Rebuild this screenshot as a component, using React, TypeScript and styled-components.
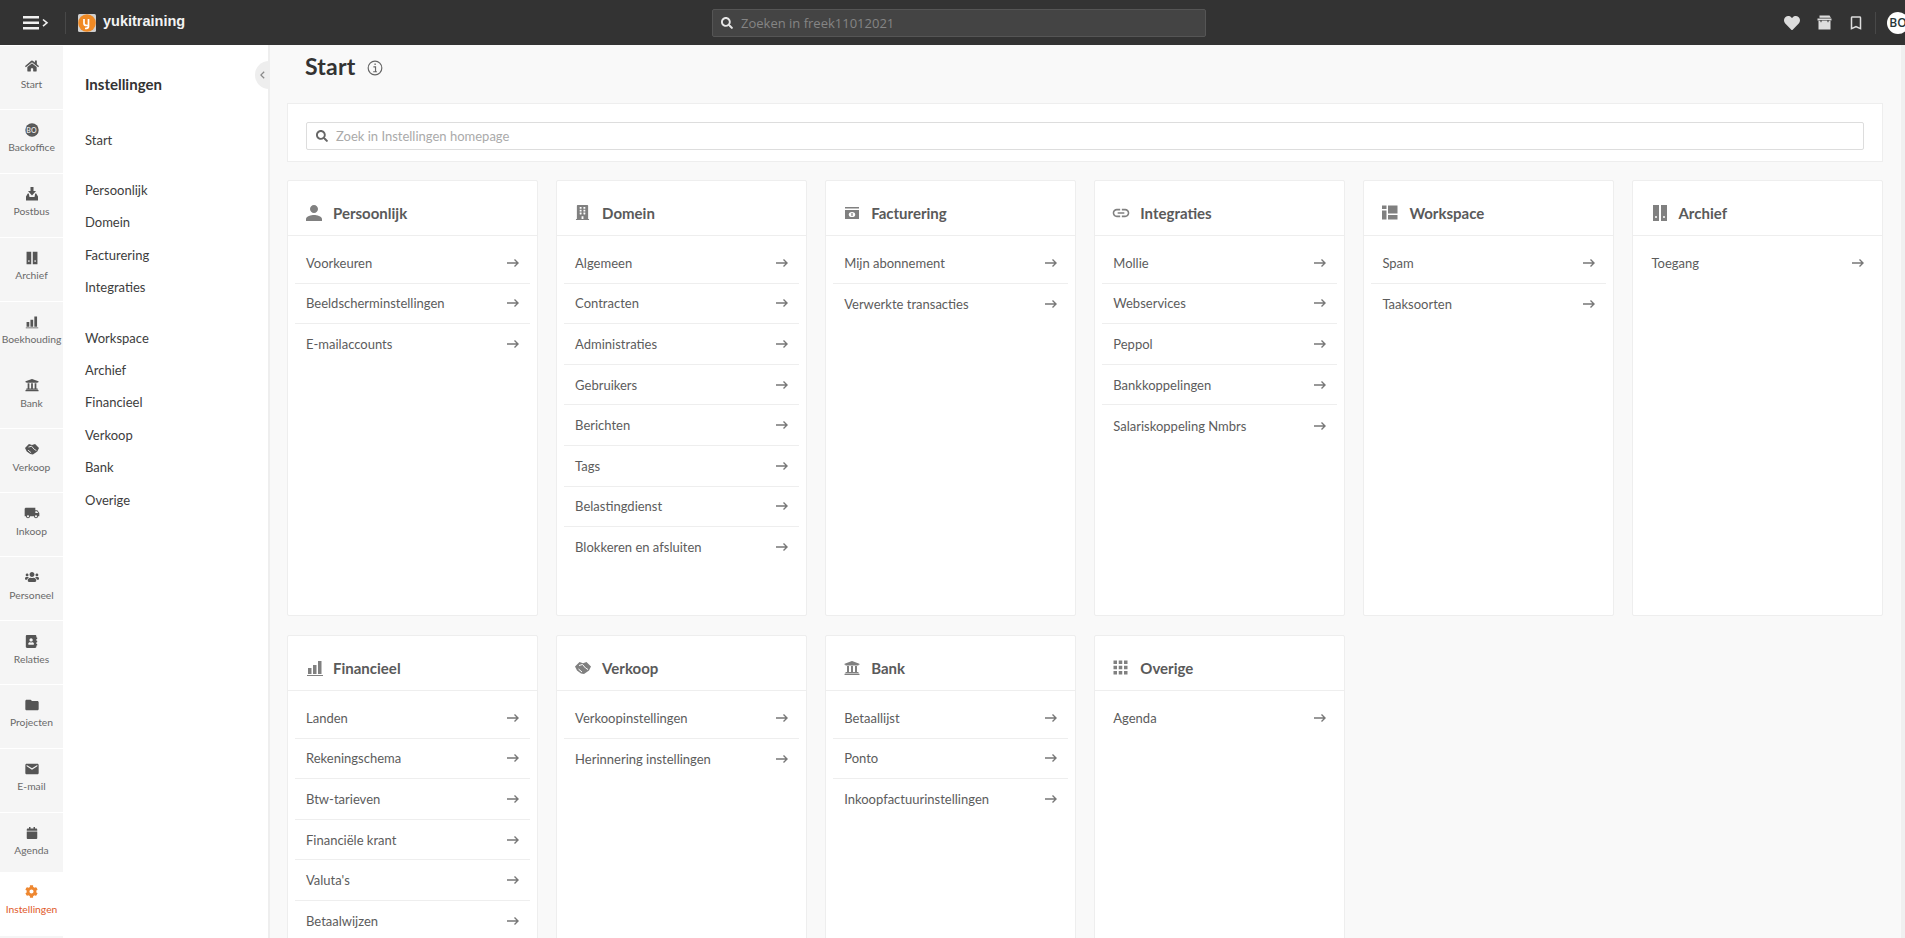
import React from "react";
import styled, { createGlobalStyle } from "styled-components";
import {
  MdPerson, MdLink, MdApps, MdEmail, MdLocalShipping, MdFolder, MdChevronLeft, MdBookmarkBorder,
} from "react-icons/md";
import { FaUsers, FaAddressBook, FaSearch, FaHeart, FaCog, FaCalendar, FaHome, FaBuilding, FaUniversity } from "react-icons/fa";

const FONT = `"Lato", "Noto Sans", sans-serif`;

const Global = createGlobalStyle`
  html, body { margin: 0; padding: 0; height: 100%; overflow: hidden; background: #f9f9f9; }
  body { font-family: ${FONT}; }
  * { box-sizing: border-box; }
`;

const Page = styled.div`
  width: 1905px;
  height: 938px;
  display: flex;
  flex-direction: column;
  overflow: hidden;
`;

const Header = styled.header`
  flex: 0 0 45px;
  height: 45px;
  background: #333333;
  display: grid;
  grid-template-columns: 712px 494px minmax(0, 1fr);
  align-items: center;
`;

const Brand = styled.div`
  display: flex;
  align-items: center;
  padding-left: 23px;
`;

const Burger = styled.div`
  width: 42px;
  display: flex;
  align-items: center;
`;

const VDivider = styled.div`
  flex: none;
  width: 1px;
  height: 22px;
  background: #484848;
`;

const LogoWrap = styled.div`
  width: 18px;
  height: 18px;
  margin-left: 12px;
  display: flex;
`;

const BrandName = styled.span`
  margin-left: 7px;
  margin-top: -3px;
  font: bold 14.5px "Liberation Sans", sans-serif;
  color: #f2f2f2;
`;

const TopSearch = styled.div`
  height: 28px;
  background: #444444;
  border: 1px solid #555555;
  border-radius: 2px;
  display: flex;
  align-items: center;
  gap: 8px;
  padding-left: 8px;
  color: #e6e6e6;
  font-size: 12px;
`;

const TopPlaceholder = styled.span`
  font: 13px "Open Sans", sans-serif;
  color: #858585;
`;

const TopRight = styled.div`
  display: flex;
  align-items: center;
  padding-left: 578px;
  color: #dddddd;
`;

const TopIcon = styled.div<{ $w: number }>`
  flex: none;
  width: ${(p) => p.$w}px;
  display: flex;
`;

const Avatar = styled.div`
  width: 22px;
  height: 22px;
  flex: 0 0 22px;
  margin-left: 11px;
  border-radius: 50%;
  background: #fff;
  color: #26363a;
  font: 600 12px "Open Sans", sans-serif;
  display: flex;
  align-items: center;
  justify-content: center;
`;

const Body = styled.div`
  flex: 1;
  display: flex;
  min-height: 0;
`;

const Rail = styled.nav`
  flex: 0 0 63px;
  background: #fff;
  overflow: hidden;
  padding-top: 1px;
`;

const RailItem = styled.div<{ $active?: boolean; $h?: number }>`
  height: ${(p) => p.$h ?? 63}px;
  margin-bottom: ${(p) => (p.$h ? 0 : 0.9)}px;
  background: ${(p) => (p.$active ? "#fff" : "#f5f5f5")};
  color: ${(p) => (p.$active ? "#ee8730" : "#555")};
  display: flex;
  flex-direction: column;
  align-items: center;
  padding-top: 11px;
`;

const RailIconBox = styled.div`
  height: 18px;
  display: flex;
  align-items: center;
  justify-content: center;
`;

const RailLabel = styled.span<{ $active?: boolean }>`
  margin-top: ${(p) => (p.$active ? 0 : 0.5)}px;
  font-size: 10.3px;
  line-height: 17px;
  white-space: nowrap;
  color: ${(p) => (p.$active ? "#e0592a" : "#6a6a6a")};
`;

const SubNav = styled.aside`
  position: relative;
  flex: 0 0 207px;
  background: #fff;
  border-right: 2px solid #eeeeee;
  padding: 29px 0 0 22px;
`;

const SubTitle = styled.div`
  font-size: 15px;
  font-weight: 700;
  line-height: 20px;
  color: #333;
  margin-bottom: 29.5px;
`;

const SubGroup = styled.div`
  margin-bottom: 18px;
`;

const SubLink = styled.div`
  font-size: 13px;
  line-height: 32.4px;
  color: #3d3d3d;
`;

const Collapse = styled.div`
  position: absolute;
  top: 16px;
  right: -2px;
  width: 15px;
  height: 28px;
  border-radius: 14px 0 0 14px;
  background: #eeeeee;
  color: #8a8a8a;
  display: flex;
  align-items: center;
  justify-content: center;
`;

const Main = styled.main`
  flex: 1;
  min-width: 0;
  overflow: hidden;
  padding: 0 18px 0 17px;
  border-right: 4px solid #f0f0f0;
`;

const TitleBar = styled.div`
  height: 58px;
  display: flex;
  align-items: flex-start;
  gap: 12px;
  padding: 6px 0 0 18px;
  color: #666;
`;

const Title = styled.h1`
  margin: 0;
  font-size: 23px;
  line-height: 30px;
  font-weight: 700;
  color: #333;
  letter-spacing: 0.2px;
`;

const InfoWrap = styled.div`
  margin-top: 9px;
  display: flex;
`;

const SearchPanel = styled.div`
  height: 59px;
  background: #fff;
  border: 1px solid #eeeeee;
  padding: 18px 18px 0;
  margin-bottom: 18px;
`;

const SearchField = styled.div`
  height: 28px;
  border: 1px solid #dddddd;
  border-radius: 2px;
  display: flex;
  align-items: center;
  gap: 8px;
  padding-left: 9px;
  color: #666;
`;

const SearchText = styled.span`
  font-size: 13px;
  color: #aaaaaa;
`;

const CardGrid = styled.div`
  display: grid;
  grid-template-columns: repeat(6, 250.8px);
  grid-auto-rows: 436px;
  gap: 19px 18.3px;
`;

const Card = styled.section`
  background: #fff;
  border: 1px solid #eeeeee;
  border-radius: 2px;
  padding: 0 7px;
`;

const CardHead = styled.div`
  height: 55px;
  margin: 0 -7px;
  padding: 9px 0 0 18px;
  display: flex;
  align-items: center;
  border-bottom: 1px solid #eeeeee;
`;

const CardIcon = styled.div`
  width: 27px;
  height: 20px;
  display: flex;
  align-items: center;
  color: #808080;
`;

const Nudge = styled.span<{ $x: number }>`
  display: flex;
  margin-left: ${(p) => p.$x}px;
`;

const CardTitle = styled.h2`
  margin: 0;
  font-size: 15px;
  font-weight: 700;
  color: #5a5a5a;
`;

const List = styled.ul`
  list-style: none;
  margin: 0;
  padding: 7px 0 0;
`;

const Item = styled.li`
  height: 40.6px;
  padding: 0 11px;
  display: flex;
  align-items: center;
  justify-content: space-between;
  font-size: 13px;
  color: #5c5c5c;
  border-bottom: 1px solid #eeeeee;
  &:last-child { border-bottom: 0; }
`;

const Arrow = () => (
  <svg width="12" height="10" viewBox="0 0 12 10" fill="none" stroke="#777" strokeWidth="1.4">
    <path d="M0 5h11M7.500 1.500 11 5 7.500 8.500" />
  </svg>
);

const ArchiveIcon = ({ s = 18 }: { s?: number }) => (
  <svg width={s} height={s} viewBox="0 0 18 18" fill="currentColor">
    <path d="M2 1h6v16H2zM10 1h6v16h-6z" />
    <circle cx="5" cy="13" r="1" fill="#fff" />
    <circle cx="13" cy="13" r="1" fill="#fff" />
  </svg>
);

const BarsIcon = ({ s = 18 }: { s?: number }) => (
  <svg width={s} height={s} viewBox="0 0 18 18" fill="currentColor">
    <path d="M2 9h3.500v6H2zM7 6h3.500v9H7zM12 2h3.500v13H12zM1 16h16v1H1z" />
  </svg>
);

const BillIcon = ({ s = 16 }: { s?: number }) => (
  <svg width={s} height={s} viewBox="0 0 16 16" fill="currentColor">
    <path d="M1 2h14v1.500H1zM1 5h14v9H1z" />
    <ellipse cx="8" cy="9.500" rx="3.200" ry="2.600" fill="#fff" />
    <rect x="7.400" y="8" width="1.200" height="3" />
  </svg>
);

const WorkspaceIcon = () => (
  <svg width="16" height="15" viewBox="0 0 16 15" fill="currentColor">
    <path d="M0 .500h4.500v3.500H0zM0 5.500h4.500v9H0zM6 .500h9.500v8H6zM6 10h9.500v4.500H6z" />
  </svg>
);

const BoxIcon = () => (
  <svg width="15" height="15" viewBox="0 0 15 15" fill="currentColor">
    <path d="M2.500 0.500h10l1.500 2.300h-11.500zM.5 3.500h14v2H.5zM1.500 6h12v8.500h-12z" />
    <rect x="3.500" y="5" width="1" height="2.200" fill="#333" />
    <rect x="10.500" y="5" width="1" height="2.200" fill="#333" />
  </svg>
);

const InboxIcon = () => (
  <svg width="14" height="14" viewBox="0 0 14 14" fill="currentColor">
    <path d="M5.500 0h3v4H11L7 8.500 3 4h2.500z" />
    <path d="M2.800 6.500 1 9.500V13.500h12V9.500l-1.800-3h-1L9.500 10h-5L3.800 6.500z" />
  </svg>
);

const ShakeIcon = ({ w = 16, bg = "#fff" }: { w?: number; bg?: string }) => (
  <svg width={w} height={(w * 12) / 16} viewBox="0 0 16 12" fill="currentColor">
    <path d="M4.500 0 8 1.200 11.500 0 16 4.500 14 8.500 9 12 6 11.500 2 8.500 0 4.500z" />
    <path d="M4 3.500 7.500 2.500 10.500 6 13 7.500M3.500 7 7 10" fill="none" stroke={bg} strokeWidth="1" />
  </svg>
);

const InfoIcon = () => (
  <svg width="16" height="16" viewBox="0 0 15 15" fill="none" stroke="#666" strokeWidth="1.1">
    <circle cx="7.500" cy="7.500" r="6.400" />
    <path d="M6 6.500h2v4.300M5.800 11h3.500" />
    <path d="M7 4h1.200" strokeWidth="1.500" />
  </svg>
);

const Logo = () => (
  <svg width="18" height="18" viewBox="0 0 18 18">
    <rect width="18" height="18" rx="1.500" fill="#cfcfcf" />
    <circle cx="9" cy="9" r="8.800" fill="#f08a24" />
    <path d="M6 5v4.500c0 1.500 1 2 2.800 2h1.700V5M10.500 9v3.500c0 1.500-1 2-3.500 2" fill="none" stroke="#fff" strokeWidth="1.700" />
  </svg>
);

const BurgerIcon = () => (
  <svg width="26" height="14" viewBox="0 0 26 14" fill="#f0f0f0">
    <path d="M0 0h16v2.400H0zM0 5.500h16v2.400H0zM0 11h16v2.400H0z" />
    <path d="M20 3.500l4 3.300-4 3.300" fill="none" stroke="#f0f0f0" strokeWidth="1.600" />
  </svg>
);

const BoSmall = () => (
  <svg width="14" height="14" viewBox="0 0 14 14">
    <circle cx="7" cy="7" r="6.700" fill="#555" />
    <circle cx="7" cy="7" r="5" fill="none" stroke="#777" strokeWidth=".4" />
  </svg>
);

const BoIconBox = styled.div`
  position: relative;
  display: flex;
  width: 14px;
  height: 14px;
`;

const BoText = styled.span`
  position: absolute;
  inset: 0;
  display: flex;
  align-items: center;
  justify-content: center;
  font-size: 7px;
  color: #ddd;
  font-weight: 700;
`;

type RailDef = { label: string; icon: React.ReactNode; active?: boolean; h?: number };

const rail: RailDef[] = [
  { label: "Start", icon: <FaHome size={14} /> },
  { label: "Backoffice", icon: <BoIconBox><BoSmall /><BoText>BO</BoText></BoIconBox> },
  { label: "Postbus", icon: <InboxIcon /> },
  { label: "Archief", icon: <ArchiveIcon s={14} /> },
  { label: "Boekhouding", icon: <BarsIcon s={14} /> },
  { label: "Bank", icon: <FaUniversity size={14} /> },
  { label: "Verkoop", icon: <ShakeIcon w={14} bg="#f5f5f5" /> },
  { label: "Inkoop", icon: <MdLocalShipping size={16} /> },
  { label: "Personeel", icon: <FaUsers size={14} /> },
  { label: "Relaties", icon: <FaAddressBook size={13} /> },
  { label: "Projecten", icon: <MdFolder size={16} /> },
  { label: "E-mail", icon: <MdEmail size={16} /> },
  { label: "Agenda", icon: <FaCalendar size={12} />, h: 59 },
  { label: "Instellingen", icon: <FaCog size={13} />, active: true },
  { label: "", icon: null },
];

const subA = ["Persoonlijk", "Domein", "Facturering", "Integraties"];
const subB = ["Workspace", "Archief", "Financieel", "Verkoop", "Bank", "Overige"];

type CardDef = { title: string; icon: React.ReactNode; items: string[] };

const cards: CardDef[] = [
  { title: "Persoonlijk", icon: <Nudge $x={-4}><MdPerson size={24} /></Nudge>, items: ["Voorkeuren", "Beeldscherminstellingen", "E-mailaccounts"] },
  { title: "Domein", icon: <FaBuilding size={15} />, items: ["Algemeen", "Contracten", "Administraties", "Gebruikers", "Berichten", "Tags", "Belastingdienst", "Blokkeren en afsluiten"] },
  { title: "Facturering", icon: <BillIcon />, items: ["Mijn abonnement", "Verwerkte transacties"] },
  { title: "Integraties", icon: <Nudge $x={-2}><MdLink size={20} /></Nudge>, items: ["Mollie", "Webservices", "Peppol", "Bankkoppelingen", "Salariskoppeling Nmbrs"] },
  { title: "Workspace", icon: <WorkspaceIcon />, items: ["Spam", "Taaksoorten"] },
  { title: "Archief", icon: <ArchiveIcon />, items: ["Toegang"] },
  { title: "Financieel", icon: <BarsIcon />, items: ["Landen", "Rekeningschema", "Btw-tarieven", "Financiële krant", "Valuta's", "Betaalwijzen"] },
  { title: "Verkoop", icon: <ShakeIcon />, items: ["Verkoopinstellingen", "Herinnering instellingen"] },
  { title: "Bank", icon: <FaUniversity size={16} />, items: ["Betaallijst", "Ponto", "Inkoopfactuurinstellingen"] },
  { title: "Overige", icon: <Nudge $x={-3}><MdApps size={21} /></Nudge>, items: ["Agenda"] },
];

export default function App() {
  return (
    <Page>
      <Global />
      <Header>
        <Brand>
          <Burger><BurgerIcon /></Burger>
          <VDivider />
          <LogoWrap><Logo /></LogoWrap>
          <BrandName>yukitraining</BrandName>
        </Brand>
        <TopSearch>
          <FaSearch />
          <TopPlaceholder>Zoeken in freek11012021</TopPlaceholder>
        </TopSearch>
        <TopRight>
          <TopIcon $w={33}><FaHeart size={16} /></TopIcon>
          <TopIcon $w={30}><BoxIcon /></TopIcon>
          <TopIcon $w={28}><MdBookmarkBorder size={18} /></TopIcon>
          <VDivider />
          <Avatar>BO</Avatar>
        </TopRight>
      </Header>
      <Body>
        <Rail>
          {rail.map((r, i) => (
            <RailItem key={i} $active={r.active} $h={r.h}>
              <RailIconBox>{r.icon}</RailIconBox>
              <RailLabel $active={r.active}>{r.label}</RailLabel>
            </RailItem>
          ))}
        </Rail>
        <SubNav>
          <SubTitle>Instellingen</SubTitle>
          <SubGroup><SubLink>Start</SubLink></SubGroup>
          <SubGroup>{subA.map((s) => <SubLink key={s}>{s}</SubLink>)}</SubGroup>
          <SubGroup>{subB.map((s) => <SubLink key={s}>{s}</SubLink>)}</SubGroup>
          <Collapse><MdChevronLeft size={20} /></Collapse>
        </SubNav>
        <Main>
          <TitleBar>
            <Title>Start</Title>
            <InfoWrap><InfoIcon /></InfoWrap>
          </TitleBar>
          <SearchPanel>
            <SearchField>
              <FaSearch size={12} />
              <SearchText>Zoek in Instellingen homepage</SearchText>
            </SearchField>
          </SearchPanel>
          <CardGrid>
            {cards.map((c) => (
              <Card key={c.title}>
                <CardHead>
                  <CardIcon>{c.icon}</CardIcon>
                  <CardTitle>{c.title}</CardTitle>
                </CardHead>
                <List>
                  {c.items.map((it) => (
                    <Item key={it}>
                      <span>{it}</span>
                      <Arrow />
                    </Item>
                  ))}
                </List>
              </Card>
            ))}
          </CardGrid>
        </Main>
      </Body>
    </Page>
  );
}
